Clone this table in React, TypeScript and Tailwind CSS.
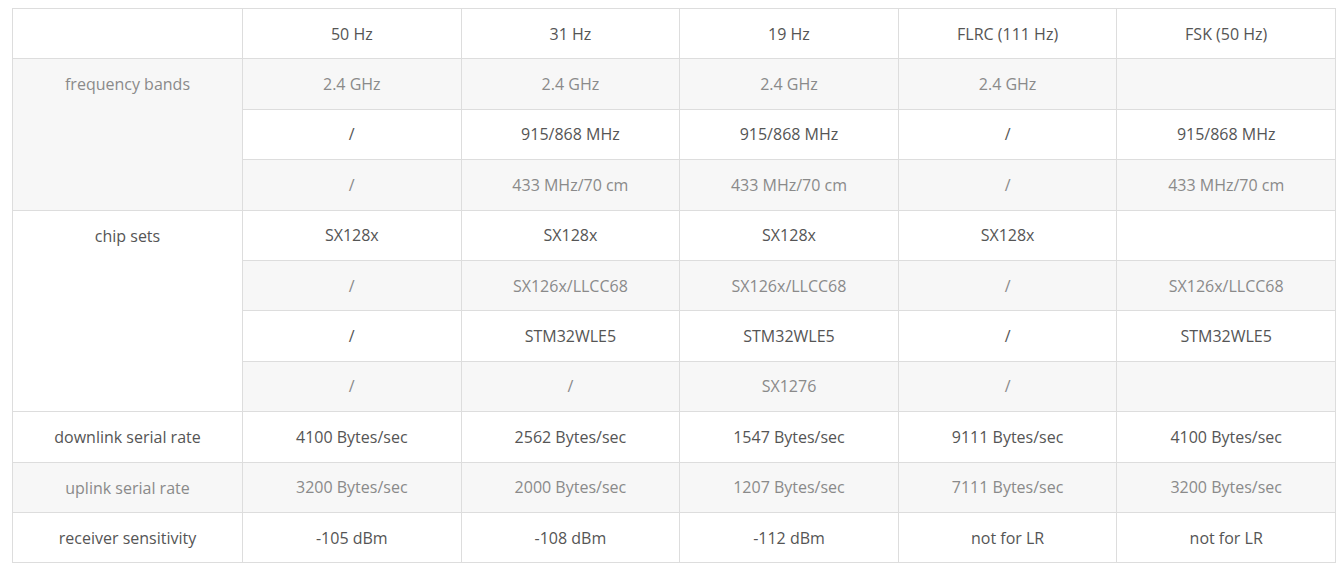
const header = ["", "50 Hz", "31 Hz", "19 Hz", "FLRC (111 Hz)", "FSK (50 Hz)"];

type Group = { label: string; rows: string[][] };

const groups: Group[] = [
  {
    label: "frequency bands",
    rows: [
      ["2.4 GHz", "2.4 GHz", "2.4 GHz", "2.4 GHz", ""],
      ["/", "915/868 MHz", "915/868 MHz", "/", "915/868 MHz"],
      ["/", "433 MHz/70 cm", "433 MHz/70 cm", "/", "433 MHz/70 cm"],
    ],
  },
  {
    label: "chip sets",
    rows: [
      ["SX128x", "SX128x", "SX128x", "SX128x", ""],
      ["/", "SX126x/LLCC68", "SX126x/LLCC68", "/", "SX126x/LLCC68"],
      ["/", "STM32WLE5", "STM32WLE5", "/", "STM32WLE5"],
      ["/", "/", "SX1276", "/", ""],
    ],
  },
  { label: "downlink serial rate", rows: [["4100 Bytes/sec", "2562 Bytes/sec", "1547 Bytes/sec", "9111 Bytes/sec", "4100 Bytes/sec"]] },
  { label: "uplink serial rate", rows: [["3200 Bytes/sec", "2000 Bytes/sec", "1207 Bytes/sec", "7111 Bytes/sec", "3200 Bytes/sec"]] },
  { label: "receiver sensitivity", rows: [["-105 dBm", "-108 dBm", "-112 dBm", "not for LR", "not for LR"]] },
];

// striping follows the <tr> index, header counts as row 0
const stripe = (i: number) => (i % 2 === 1 ? "bg-[#f7f7f7] text-[#8a8a8a]" : "bg-white text-[#555555]");

export default function App() {
  let rowIndex = 0;

  return (
    <div className="min-h-screen bg-white pt-2 pl-3" style={{ fontFamily: '"Open Sans", "Noto Sans", sans-serif' }}>
      <table className="w-[1324px] table-fixed border-collapse text-center text-base">
        <colgroup>
          <col className="w-[230px]" />
          <col />
          <col />
          <col />
          <col />
          <col />
        </colgroup>
        <tbody>
          <tr className={stripe(rowIndex++)}>
            {header.map((h, i) => (
              <td key={i} className="h-[50.4px] border border-[#dddddd] p-0 align-middle leading-6">
                {h}
              </td>
            ))}
          </tr>
          {groups.map((g) =>
            g.rows.map((row, r) => {
              const cls = stripe(rowIndex++);
              return (
                <tr key={g.label + r} className={cls}>
                  {r === 0 && (
                    <td
                      rowSpan={g.rows.length}
                      className="border border-[#dddddd] px-2 pt-[13px] pb-0 align-top leading-6"
                    >
                      {g.label}
                    </td>
                  )}
                  {row.map((c, i) => (
                    <td key={i} className="h-[50.4px] border border-[#dddddd] p-0 align-middle leading-6">
                      {c}
                    </td>
                  ))}
                </tr>
              );
            })
          )}
        </tbody>
      </table>
    </div>
  );
}
